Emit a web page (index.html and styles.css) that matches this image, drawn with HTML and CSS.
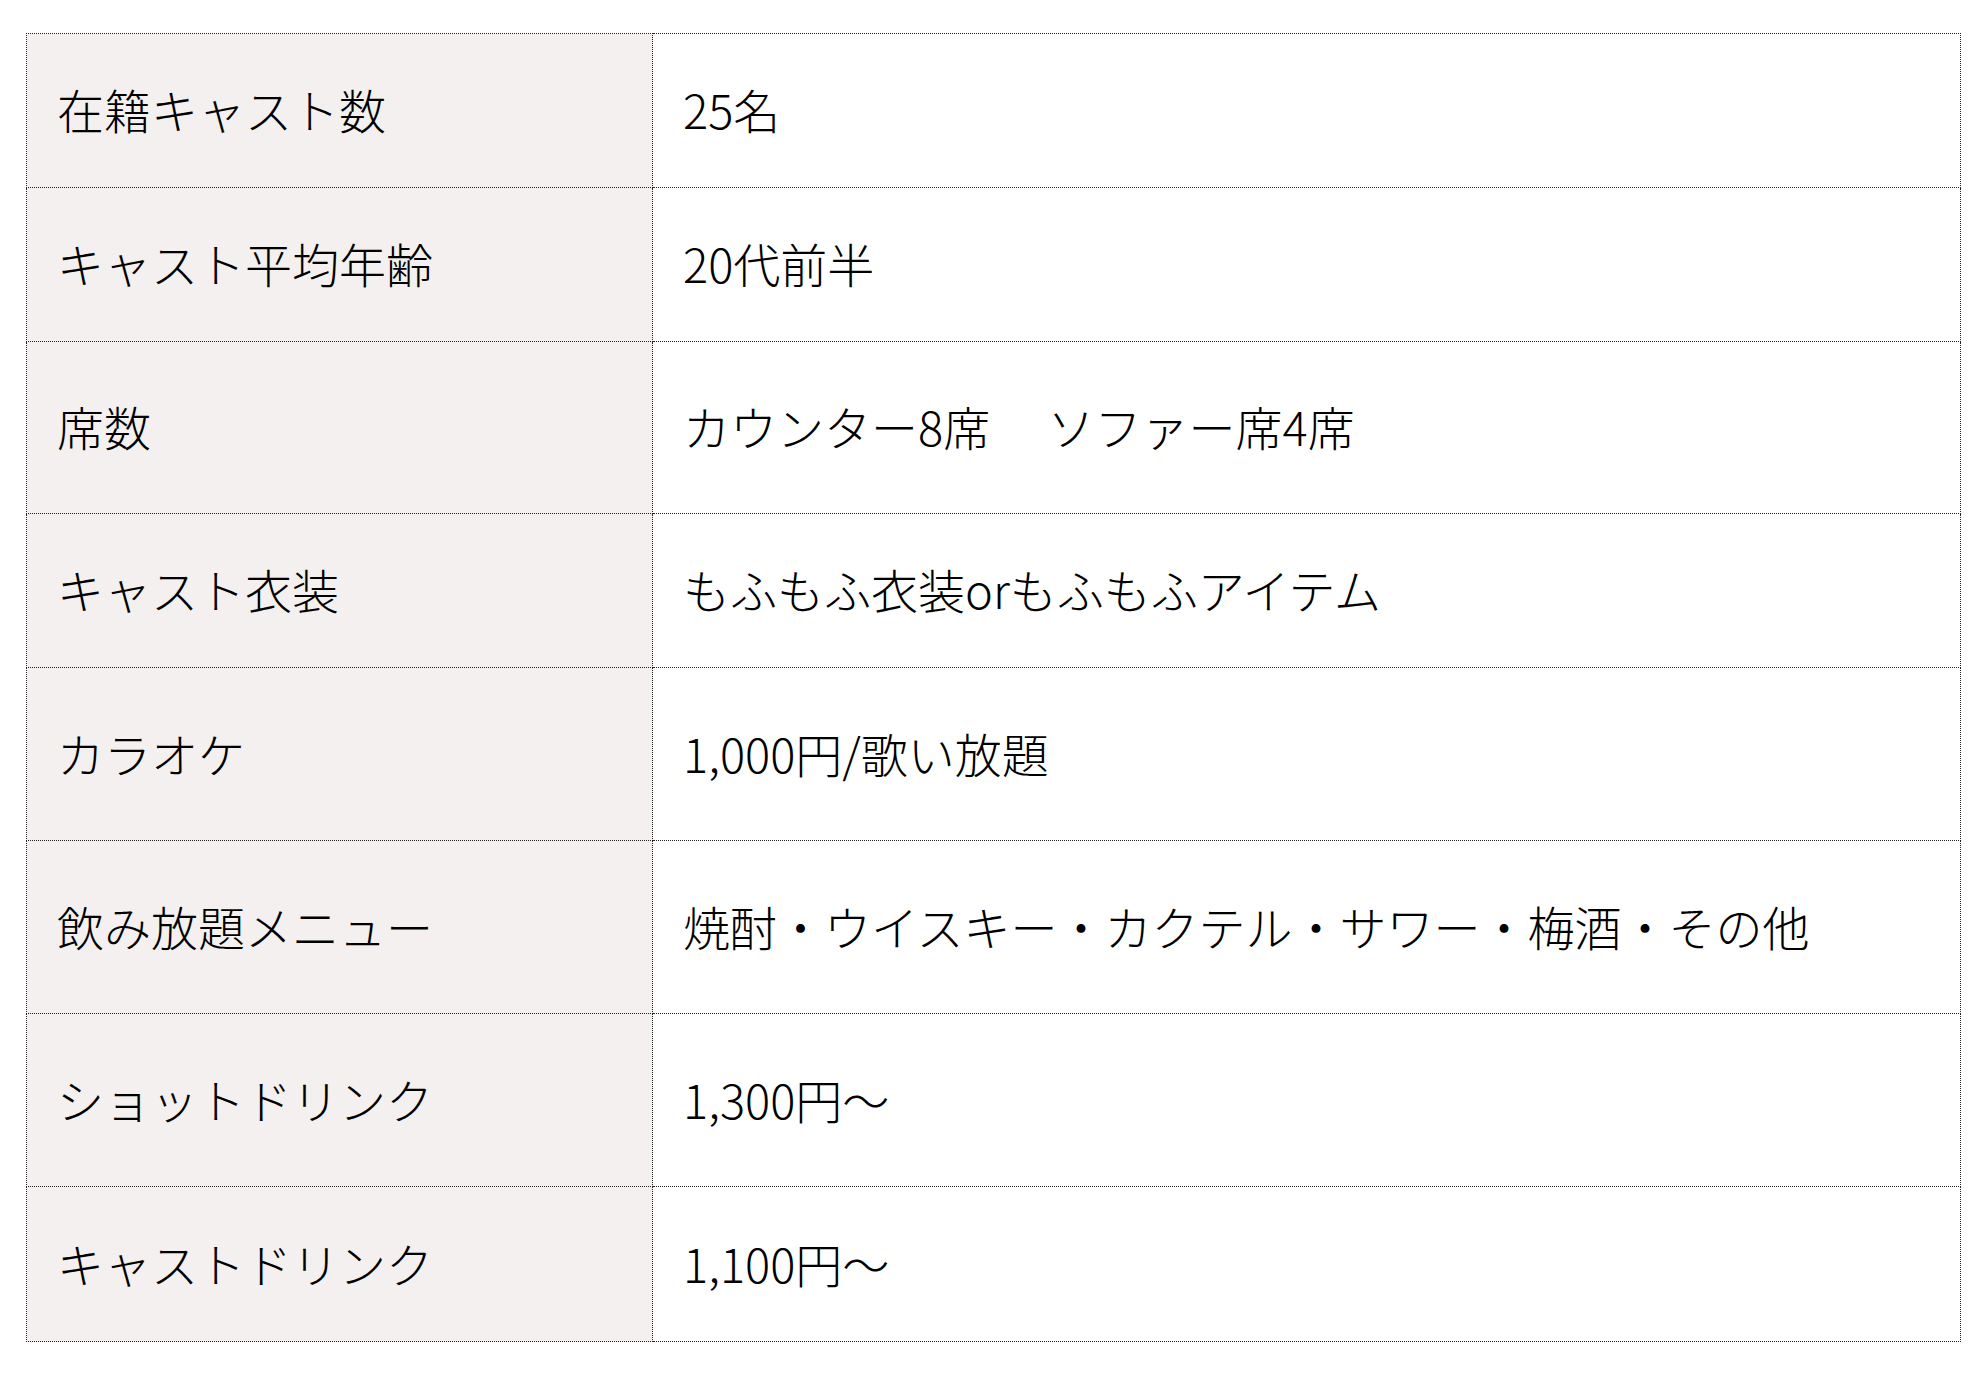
FILE: index.html
```html
<!DOCTYPE html>
<html lang="ja">
<head>
<meta charset="utf-8">
<title>店舗情報</title>
<link rel="stylesheet" href="styles.css">
</head>
<body>
<div class="page">
  <table class="info">
    <tbody>
      <tr class="row"><th class="label">在籍キャスト数</th><td class="value">25名</td></tr>
      <tr class="row"><th class="label">キャスト平均年齢</th><td class="value">20代前半</td></tr>
      <tr class="row mid"><th class="label">席数</th><td class="value">カウンター8席　 ソファー席4席</td></tr>
      <tr class="row"><th class="label">キャスト衣装</th><td class="value">もふもふ衣装orもふもふアイテム</td></tr>
      <tr class="row tall"><th class="label">カラオケ</th><td class="value">1,000円/歌い放題</td></tr>
      <tr class="row tall"><th class="label">飲み放題メニュー</th><td class="value">焼酎・ウイスキー・カクテル・サワー・梅酒・その他</td></tr>
      <tr class="row tall"><th class="label">ショットドリンク</th><td class="value">1,300円〜</td></tr>
      <tr class="row last"><th class="label">キャストドリンク</th><td class="value">1,100円〜</td></tr>
    </tbody>
  </table>
</div>
</body>
</html>
```

FILE: styles.css
```css
html, body {
  margin: 0;
  padding: 0;
  background: #ffffff;
}

.page {
  padding: 33px 20px 0 26px;
}

.info {
  width: 1935px;
  border-collapse: collapse;
  font-family: "Noto Sans CJK JP", "Noto Sans", sans-serif;
  font-size: 47px;
  color: #000000;
  border: 1px dotted #1a1a1a;
}

.row {
  height: 154px;
}

.row.mid {
  height: 172px;
}

.row.tall {
  height: 173px;
}

.row.last {
  height: 155px;
}

.label,
.value {
  border: 1px dotted #222222;
  padding: 0 30px 4px;
  text-align: left;
  vertical-align: middle;
  font-weight: 300;
  white-space: nowrap;
}

.label {
  width: 565px;
  background: #f3f0ef;
}

.value {
  background: #ffffff;
}
```
